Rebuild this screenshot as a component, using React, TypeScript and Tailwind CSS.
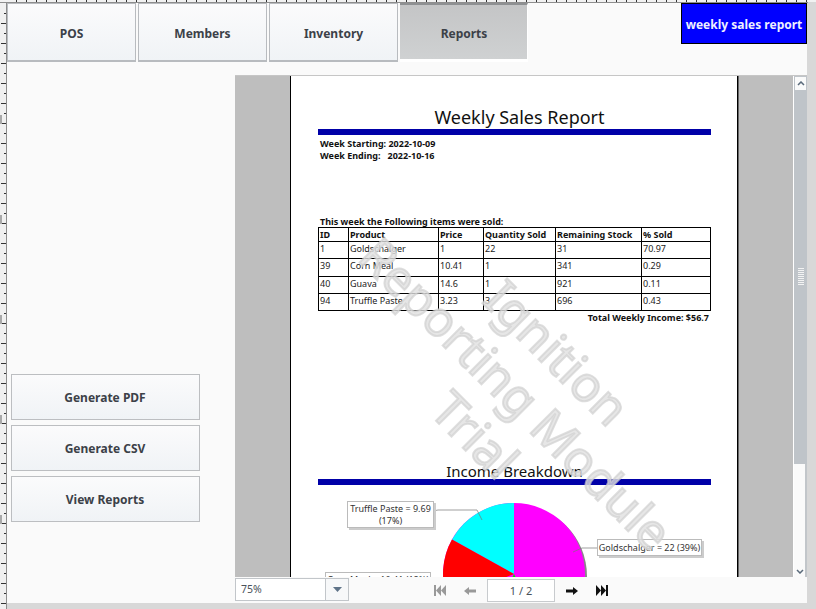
import React from "react";

const ns = { fontFamily: '"Noto Sans", sans-serif' };

function NavBtn({ label, w, active }: { label: string; w: string; active?: boolean }) {
  return (
    <button
      className={
        active
          ? `${w} h-[59px] pt-[3px] pl-px border-t-2 border-t-[#8e9092] border-b-[3px] border-b-white border-r border-r-white bg-gradient-to-b from-[#c4c5c6] to-[#cfd1d2] text-[12px] font-bold text-[#3c4148]`
          : `${w} h-[59px] pt-[3px] border border-[#b8bbbf] border-b-2 bg-gradient-to-b from-[#fbfbfc] to-[#f0f3f6] text-[12px] font-bold text-[#3c4148]`
      }
    >
      {label}
    </button>
  );
}

function SideBtn({ label }: { label: string }) {
  return (
    <button className="w-[189px] h-[46px] pt-[2px] pr-[1px] border border-[#bcbec1] bg-gradient-to-b from-[#fbfbfc] to-[#f0f3f6] text-[12px] font-bold text-[#3c4148]">
      {label}
    </button>
  );
}

const rows = [
  ["1", "Goldschalger", "1", "22", "31", "70.97"],
  ["39", "Corn Meal", "10.41", "1", "341", "0.29"],
  ["40", "Guava", "14.6", "1", "921", "0.11"],
  ["94", "Truffle Paste", "3.23", "3", "696", "0.43"],
];
const cols = ["w-[30px]", "w-[90px]", "w-[45px]", "w-[72px]", "w-[86px]", "w-[69px]"];
const heads = ["ID", "Product", "Price", "Quantity Sold", "Remaining Stock", "% Sold"];
const rowH = ["h-[17px]", "h-[18px]", "h-[17px]", "h-[17px]"];

function Ruler() {
  return (
    <>
      <div className="absolute left-0 top-0 w-full h-[2px] flex pl-[7px] bg-[#f2f2f2]">
        {Array.from({ length: 81 }, (_, i) => (
          <div key={i} className="w-[10px] shrink-0 h-[2px] border-r border-[#333]" />
        ))}
      </div>
      <div className="absolute left-0 top-[2px] w-[808px] h-px bg-[#8d8d8d]" />
      <div className="absolute left-0 top-[3px] w-[6px] h-[606px] bg-[#f0f0f0] flex flex-col pt-[10px]">
        {Array.from({ length: 60 }, (_, i) => (
          <div key={i} className="h-[10px] shrink-0 flex justify-end items-start">
            <div className={i % 2 === 1 ? "w-[5px] h-px bg-[#333]" : "w-[2px] h-px bg-[#333]"} />
          </div>
        ))}
      </div>
      <div className="absolute left-[6px] top-[2px] w-px h-[607px] bg-[#8d8d8d]" />
      {["top-[115px]", "top-[215px]", "top-[315px]", "top-[415px]", "top-[515px]"].map((t) => (
        <div key={t} className={`absolute left-0 ${t} w-[2px] h-[9px] bg-[#a8a8a8]`} />
      ))}
    </>
  );
}

function Pie() {
  return (
    <svg width="393" height="170" viewBox="0 0 393 170" className="block">
      <circle cx="198" cy="91" r="71" fill="#888" />
      <circle cx="196" cy="89" r="71" fill="#ff00ff" />
      <path d="M196 89 L196 18 A71 71 0 0 0 134 54.4 Z" fill="#00ffff" />
      <path d="M196 89 L134 54.4 A71 71 0 0 0 130 115 L196 89 Z" fill="#ff0000" />
      <path d="M196 89 L188 105 L204 105 Z" fill="#00e000" />
      <path d="M115 26 L120 25 H159 L164 35" fill="none" stroke="#777" strokeWidth="0.7" />
      <path d="M279 63 H264 L255 67" fill="none" stroke="#777" strokeWidth="0.7" />
    </svg>
  );
}

export default function App() {
  return (
    <div style={ns} className="relative w-[816px] h-[609px] overflow-hidden bg-[#d8d8d8]">
      <div className="absolute left-[7px] top-[3px] w-[800px] h-[600px] bg-[#fafafa] flex flex-col">
        <div className="flex h-[59px] shrink-0">
          <div className="flex gap-[2px] w-[521px]">
            <NavBtn label="POS" w="w-[129px]" />
            <NavBtn label="Members" w="w-[129px]" />
            <NavBtn label="Inventory" w="w-[129px]" />
            <NavBtn label="Reports" w="w-[128px]" active />
          </div>
          <div className="ml-[153px] w-[126px] h-[41px] pt-[2px] bg-[#0000ff] border border-black flex items-center justify-center text-[12px] font-bold text-[#eef0ff] whitespace-nowrap">
            weekly sales report
          </div>
        </div>
        <div className="flex flex-1 mt-[13px] min-h-0">
          <div className="w-[228px] shrink-0 flex flex-col gap-[5px] pl-[4px] pt-[299px]">
            <SideBtn label="Generate PDF" />
            <SideBtn label="Generate CSV" />
            <SideBtn label="View Reports" />
          </div>
          <div className="w-[572px] flex flex-col">
            <div className="flex h-[502px] border-t border-[#c6c6c6]">
              <div className="relative w-[558px] bg-[#bebebe] overflow-hidden">
                <div className="relative w-[448px] h-[700px] ml-[55px] bg-white border-x border-black shadow-[1px_0_0_#666] pl-[27px] pr-[26px] pt-[28px]">
                  <div className="text-center text-[18px] leading-[25px] text-[#111] pl-[10px] pt-px">Weekly Sales Report</div>
                  <div className="h-[6px] bg-[#0000a8] mt-[-1px]" />
                  <div className="text-[9px] font-bold text-[#111] leading-[12px] pl-[2px] mt-[3px]">
                    <div>Week Starting: 2022-10-09</div>
                    <div>Week Ending:&nbsp;&nbsp; 2022-10-16</div>
                  </div>
                  <div className="text-[9px] font-bold text-[#111] leading-[12px] pl-[2px] mt-[54px]">
                    This week the Following items were sold:
                  </div>
                  <div className="border-t border-l border-black w-[393px] text-[9px] text-[#222] mt-[-1px]">
                    <div className="flex h-[14px] border-b border-black font-bold text-[#111]">
                      {heads.map((h, i) => (
                        <div key={h} className={`${cols[i]} shrink-0 border-r border-black pl-px leading-[13px] whitespace-nowrap`}>{h}</div>
                      ))}
                    </div>
                    {rows.map((r, ri) => (
                      <div key={r[0]} className={`flex ${rowH[ri]} border-b border-black`}>
                        {r.map((c, i) => (
                          <div key={i} className={`${cols[i]} shrink-0 border-r border-black pl-px leading-[14px] whitespace-nowrap`}>{c}</div>
                        ))}
                      </div>
                    ))}
                  </div>
                  <div className="w-[391px] text-right text-[9px] font-bold text-[#111] leading-[13px]">Total Weekly Income: $56.7</div>
                  <div className="text-center text-[15px] leading-[20px] text-[#111] mt-[137px]">Income Breakdown</div>
                  <div className="h-[6px] bg-[#0000a8] mt-[-2px]" />
                  <div className="relative">
                    <Pie />
                    <div className="absolute left-[29px] top-[16px] w-[87px] h-[27px] bg-white border border-[#bbb] shadow-[2px_2px_0_#ccc] text-[9px] text-[#333] text-center leading-[12px] pt-px">
                      Truffle Paste = 9.69<br />(17%)
                    </div>
                    <div className="absolute left-[279px] top-[54px] w-[105px] h-[17px] bg-white border border-[#bbb] shadow-[2px_2px_0_#ccc] text-[9px] text-[#333] text-center leading-[15px] whitespace-nowrap">
                      Goldschalger = 22 (39%)
                    </div>
                    <div className="absolute left-[7px] top-[87px] w-[106px] h-[28px] bg-white border border-[#bbb] text-[9px] text-[#333] text-center leading-[13px] whitespace-nowrap">
                      Corn Meal = 10.41 (18%)
                    </div>
                  </div>
                  <div className="absolute left-[226px] top-[317px] w-0 h-0 rotate-45 pointer-events-none">
                    <div className="absolute left-0 top-0 -translate-x-1/2 -translate-y-1/2 whitespace-nowrap text-center text-[49px] leading-[58px] text-[#e0e0e0]/80 [-webkit-text-stroke:2px_rgba(208,208,208,0.7)]">
                      <div>Ignition</div>
                      <div>Reporting Module</div>
                      <div>Trial</div>
                    </div>
                  </div>
                </div>
              </div>
              <div className="w-[14px] flex flex-col bg-[#bfc4c9] border-l border-white">
                <div className="h-[14px] flex items-center justify-center text-[#5a6a7a] px-px pt-px">
                  <div className="w-full h-full bg-[#fafafa] flex items-center justify-center">
                    <svg width="8" height="5" viewBox="0 0 8 5"><path d="M1 4 L4 1 L7 4" fill="none" stroke="currentColor" strokeWidth="1.5" /></svg>
                  </div>
                </div>
                <div className="h-[374px] bg-[#bfc4c9] flex items-center justify-center">
                  <div className="w-[6px] h-[18px] bg-[repeating-linear-gradient(to_bottom,#f3f3f3_0,#f3f3f3_1px,transparent_1px,transparent_2px)]" />
                </div>
                <div className="flex-1 bg-[#fafafa] border-r-2 border-[#c2c6ca] flex items-end justify-center pb-[3px] text-[#5a6a7a]">
                  <svg width="8" height="5" viewBox="0 0 8 5"><path d="M1 1 L4 4 L7 1" fill="none" stroke="currentColor" strokeWidth="1.5" /></svg>
                </div>
              </div>
            </div>
            <div className="h-[26px] flex items-start bg-[#fafafa]">
              <div className="w-[114px] h-[23px] mt-px flex bg-white border border-[#c2c6ca] text-[10.5px] text-[#4a525a]">
                <div className="flex-1 pl-[5px] leading-[21px]">75%</div>
                <div className="w-[23px] bg-[#f7f8f9] border-l border-[#c2c6ca] flex items-center justify-center">
                  <svg width="9" height="5" viewBox="0 0 9 5"><path d="M0 0 H9 L4.5 5 Z" fill="#5f7388" /></svg>
                </div>
              </div>
              <div className="flex items-center ml-[85px] mt-[2px] h-[23px]">
                <svg width="12" height="11" viewBox="0 0 12 11" fill="#999"><rect x="0" y="0" width="2" height="11" /><path d="M7 0 V11 L2 5.5 Z" /><path d="M12 0 V11 L7 5.5 Z" /></svg>
                <svg className="ml-[18px]" width="12" height="8" viewBox="0 0 12 8" fill="#999"><path d="M0 4 L5 0 V2.5 H12 V5.5 H5 V8 Z" /></svg>
                <div className="ml-[11px] w-[68px] h-[23px] bg-white border border-[#c8cbce] text-[11px] text-[#4a525a] text-center leading-[21px]">1 / 2</div>
                <svg className="ml-[11px]" width="12" height="8" viewBox="0 0 12 8" fill="#111"><path d="M12 4 L7 0 V2.5 H0 V5.5 H7 V8 Z" /></svg>
                <svg className="ml-[18px]" width="12" height="11" viewBox="0 0 12 11" fill="#111"><path d="M0 0 V11 L5 5.5 Z" /><path d="M5 0 V11 L10 5.5 Z" /><rect x="10" y="0" width="2" height="11" /></svg>
              </div>
            </div>
          </div>
        </div>
      </div>
      <Ruler />
    </div>
  );
}
